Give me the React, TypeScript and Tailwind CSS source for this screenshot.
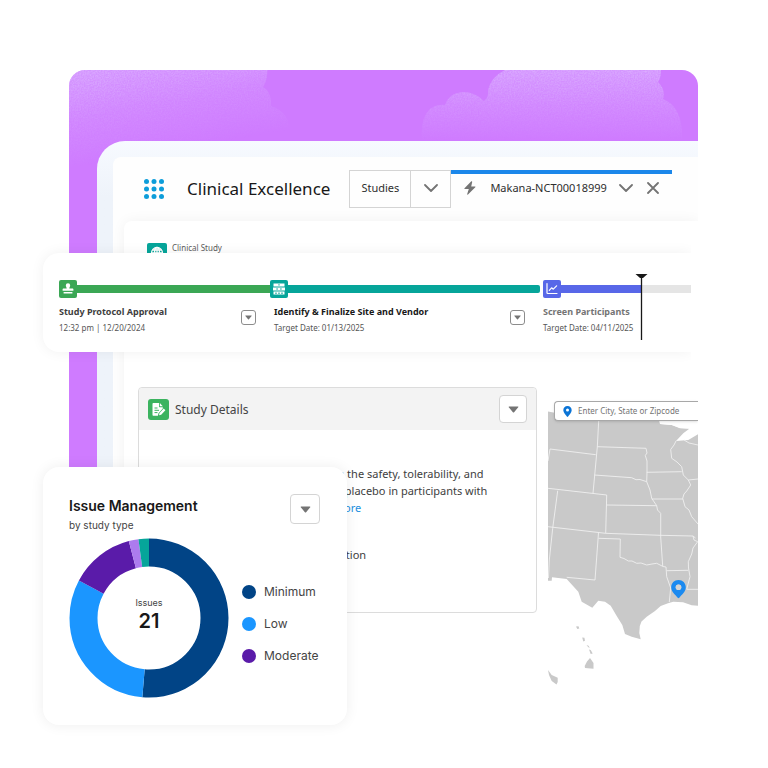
import type { ReactNode } from "react";

const SANS = "font-['Noto_Sans','Open_Sans',sans-serif]";

function Caret({ className }: { className: string }) {
  return (
    <svg viewBox="0 0 12 8" className={className} aria-hidden="true">
      <path d="M1 0.5h10c.5 0 .8.5.4.9L6.7 7.2c-.4.4-1 .4-1.4 0L.6 1.4C.2 1 .5.5 1 .5z" fill="#747474" />
    </svg>
  );
}

function Chevron() {
  return (
    <svg viewBox="0 0 14 8" className="h-2 w-3.5" fill="none" stroke="#747474" strokeWidth="1.8" strokeLinecap="round" strokeLinejoin="round" aria-hidden="true">
      <path d="M1 1l6 6 6-6" />
    </svg>
  );
}

const CLOUD_LEFT = "M69 70H267.5Q267 82 263 87Q272 92 271 106Q290 112 291 135V180H69z";
const CLOUD_RIGHT =
  "M422 141Q420 118 430 109Q437 104 445 105Q449 93 463 92Q475 92 484 101Q489 97 488 90Q491 77 505 70H661Q661 78 658 82Q666 90 663 99Q680 106 682 130V141z";

function Clouds() {
  return (
    <>
      <svg viewBox="69 70 230 110" className="absolute top-0 left-0 h-[110px] w-[230px]" aria-hidden="true">
        <defs>
          <linearGradient id="fadeL" x1="0" y1="0" x2="0.35" y2="1">
            <stop offset="0" stopColor="#dcbcff" stopOpacity="0.42" />
            <stop offset="0.4" stopColor="#dcbcff" stopOpacity="0.15" />
            <stop offset="0.8" stopColor="#dcbcff" stopOpacity="0" />
          </linearGradient>
          <filter id="grain" x="0" y="0" width="1" height="1" colorInterpolationFilters="sRGB">
            <feTurbulence type="fractalNoise" baseFrequency="0.7" numOctaves="2" seed="4" />
            <feColorMatrix values="0 0 0 0 0.9  0 0 0 0 0.82  0 0 0 0 1  1.8 0 0 0 -0.5" result="n" />
            <feComposite in="n" in2="SourceGraphic" operator="in" />
          </filter>
        </defs>
        <path d={CLOUD_LEFT} fill="url(#fadeL)" />
        <path d={CLOUD_LEFT} fill="url(#fadeL)" filter="url(#grain)" />
      </svg>
      <svg viewBox="418 70 280 72" className="absolute top-0 right-0 h-[72px] w-[280px]" aria-hidden="true">
        <defs>
          <linearGradient id="fadeR" x1="0" y1="0" x2="0" y2="1">
            <stop offset="0" stopColor="#dcbcff" stopOpacity="0.4" />
            <stop offset="0.5" stopColor="#dcbcff" stopOpacity="0.17" />
            <stop offset="1" stopColor="#dcbcff" stopOpacity="0" />
          </linearGradient>
        </defs>
        <path d={CLOUD_RIGHT} fill="url(#fadeR)" />
        <path d={CLOUD_RIGHT} fill="url(#fadeR)" filter="url(#grain)" />
      </svg>
    </>
  );
}

function AppHeader() {
  return (
    <header className="flex h-16 items-center pl-[31px]">
      <button type="button" aria-label="App launcher" className="shrink-0">
        <svg viewBox="0 0 20 20" className="size-5" fill="#0d9dda" aria-hidden="true">
          {[2.5, 10, 17.5].map((y) => [2.5, 10, 17.5].map((x) => <circle key={`${x}-${y}`} cx={x} cy={y} r="2.500" />))}
        </svg>
      </button>
      <h1 className="ml-[23px] shrink-0 text-[17px] leading-6 whitespace-nowrap text-[#181818]">Clinical Excellence</h1>
      <nav className="ml-[19px] flex h-[38px] shrink-0 text-[11px] text-[#2e2e2e]">
        <button type="button" className="w-[62px] border border-[#d4d4d4] pb-0.5">Studies</button>
        <button type="button" aria-label="Studies menu" className="-ml-px flex w-[41px] items-center justify-center border border-[#d4d4d4] pb-0.5">
          <Chevron />
        </button>
        <div className="flex w-[221px] items-center border-t-4 border-[#1b87ea] pb-1.5 pl-[13px]">
          <svg viewBox="0 0 12 14" className="h-3.5 w-3 shrink-0" fill="#747474" aria-hidden="true">
            <path d="M7.300 0.300L0.500 7.200c-.3.4-.1.800.3.800H4.800L3.200 13c-.2.600.4.900.8.500L11.300 6.200c.3-.3.100-.8-.3-.8H7.200L8.200 1C8.300.3 7.700 0 7.300.3z" />
          </svg>
          <a href="#study" className="ml-3.5 whitespace-nowrap">Makana-NCT00018999</a>
          <span className="ml-auto flex items-center gap-3.5 pr-[13px]">
            <button type="button" aria-label="Tab menu"><Chevron /></button>
            <button type="button" aria-label="Close tab">
              <svg viewBox="0 0 12 12" className="size-3" stroke="#747474" strokeWidth="1.800" strokeLinecap="round" aria-hidden="true">
                <path d="M1 1l10 10M11 1L1 11" />
              </svg>
            </button>
          </span>
        </div>
      </nav>
    </header>
  );
}

function StudyDetails() {
  return (
    <section className="min-h-[226px] min-w-0 flex-1 rounded border border-[#dcdcdc] bg-white">
      <div className="flex h-[42px] items-center rounded-t bg-[#f3f3f3] pr-[9px] pl-[9px]">
        <svg viewBox="0 0 21 21" className="size-[21px]" aria-hidden="true">
          <rect width="21" height="21" rx="3" fill="#3bb35f" />
          <path d="M5.500 4h5.500v3.200c0 .6.4 1 1 1h2.800v1.300l-4.300 4.700-.6 2.600H5.500c-.6 0-1-.4-1-1V5c0-.6.4-1 1-1z" fill="#fff" />
          <path d="M11.800 4l3 3.300h-3z" fill="#fff" />
          <path d="M6.500 9h3M6.500 11.300h4.500M6.500 13.600h3" stroke="#3bb35f" strokeWidth="1" />
          <path d="M15.700 9.600l1.700 1.700-4.200 4.400-2.200.6.500-2.300z" fill="#fff" />
        </svg>
        <h2 className="ml-1.5 pt-0.5 text-xs leading-5 text-[#444]">Study Details</h2>
        <button type="button" aria-label="Study details menu" className="ml-auto flex size-7 items-center justify-center rounded border border-[#d4d4d4] bg-white">
          <Caret className="h-[7px] w-[11px]" />
        </button>
      </div>
      <div className="pt-[35px] pl-[183px] text-[11px] leading-[17px] whitespace-nowrap text-[#3e3e3e]">
        <p>
          with the safety, tolerability, and
          <br />
          oral placebo in participants with
          <br />
          <a href="#more" className="text-[#1b8fe0]">... more</a>
        </p>
        <p className="mt-[30px]">Location</p>
      </div>
    </section>
  );
}

const STATE_LINES = [
  "M598.700 421L597.300 447L593 493.300",
  "M548 461L550 449L595.700 454.700",
  "M597.300 446.700L646 448.300L647 453L645.300 455.500L647 461V472L646.700 481.700",
  "M594.300 475L631.700 477.700L636 479.700L640 479.500L646.700 481.700L650 490L651.700 498.300L656.700 505.700L657.500 510L660.700 513.300V537",
  "M646.700 472.300L681.700 471.700",
  "M676 441L674 445L670.700 449.500L671.700 458.300L677 462L681.700 466.700L683.300 475L688.300 480L690.700 485L686.700 491L684 494L682.700 498.300L685 506.700L689 510L691.700 516.700L698 524",
  "M688.300 480L698 479",
  "M684 440L689 443L698 445",
  "M651.700 499H683",
  "M548 488.300L606.700 495L605.700 533.300",
  "M606.700 505L656.700 505.700",
  "M557.700 490.700L552.700 528.300L549.300 560L548.500 578",
  "M548 526.700L605.700 533.300L660 535.300L693 536L695.500 538",
  "M598.500 532.700L595 580L566.700 577.300",
  "M598.500 538.300L620.300 539L620 557.300L624 558.500L628.300 561L632 561L636.700 563.300L641 563L646.700 565L652 564L656.700 563.300L663 566.500L666 567L666.700 576.700L670.700 588L669.300 602",
  "M660.700 537L662.700 566",
  "M693 536L694 540L697.700 541.700L693 548L691.700 554L688.300 561.700L688.500 568L690 576.700L686.700 589.300H698",
  "M666.700 570.700L688.300 570.300",
];

function SiteMap() {
  return (
    <section className="w-[150px] shrink-0 pt-3.5">
      <div className="relative z-10 -mb-2.5 ml-1.5 flex h-5 items-center rounded-l-sm border border-r-0 border-[#a8a8a8] bg-white pl-2 shadow-sm">
        <svg viewBox="0 0 9 11" className="h-[11px] w-[9px] shrink-0" aria-hidden="true">
          <path fillRule="evenodd" d="M4.500 0C2 0 .300 1.900.300 4.200c0 2.600 2.600 4.500 3.600 6.300.3.500.9.500 1.200 0 1-1.800 3.600-3.700 3.600-6.300C8.700 1.900 7 0 4.500 0zm0 2.600a1.500 1.500 0 110 3 1.500 1.500 0 010-3z" fill="#0b74d6" />
        </svg>
        <input type="text" aria-label="Enter City, State or Zipcode" placeholder="Enter City, State or Zipcode" className="ml-1.5 w-full min-w-0 text-[8px] leading-3 outline-none placeholder:text-[#747474]" />
      </div>
      <svg viewBox="548 411 150 275" className="h-[275px] w-[150px]" role="img" aria-label="Map of study sites">
        <path
          fill="#c9c9c9"
          d="M548 411.500L556 413H658L660 424L671.700 425L680 428.300L689.300 428.700L683.300 433.300L676 441L682 440.500L688.300 440L698 434.300V605.700L691.700 605.300L683 602.300L673.300 601.700L668 603.300L660.700 606L655 611L646.700 616.700L641.500 621.500L639.800 626L639.300 633L640.700 639.200L631.700 636.700L625 634L622.300 625L616.700 616L610.700 605.700L605 601.700L598.300 600.700L592.300 607.700L581.700 601.700L578.300 591.700L566.700 579L552 577.300L551.700 580.700H548z"
        />
        <path fill="#fff" d="M658 411h40v17l-9 .5-9-.5-8-3-12-1z" />
        <g fill="none" stroke="#efefef" strokeWidth="0.900" strokeLinejoin="round">
          {STATE_LINES.map((d) => <path key={d} d={d} />)}
        </g>
        <g fill="#c9c9c9">
          <path d="M576 626.500l2.500-.3.800 2.300-2 .6zM582.200 637.500l2.200.3.600 3-1.700.8zM586.500 645l2 .8 1.300 2-1.500-.6zM589 649.500l1.700.5 2 3.500-2 .5z" />
          <path d="M590 658L593.500 663V668.700L585 668L584.700 666L587 661.500zM548 670L551.700 675L557.700 677.700V682L556.500 684.500L551.700 681L549 675z" />
        </g>
        <path
          fillRule="evenodd"
          fill="#1b8af0"
          d="M678.500 580c-4.200 0-7.300 3.200-7.300 7.200 0 4.700 4.500 7.600 6.500 10.600.4.600 1.200.6 1.600 0 2-3 6.500-5.900 6.500-10.600 0-4-3.100-7.200-7.300-7.200zm0 4.500a2.800 2.800 0 110 5.600 2.800 2.800 0 010-5.600z"
        />
        <circle cx="678.500" cy="587.300" r="2.800" fill="#d4d4d4" />
      </svg>
    </section>
  );
}

function StageIcon({ className, children }: { className: string; children: ReactNode }) {
  return (
    <span className={`size-[18px] shrink-0 rounded-xs ${className}`}>
      <svg viewBox="0 0 18 18" className="size-[18px]" aria-hidden="true">{children}</svg>
    </span>
  );
}

function StageText({ title, date, className, menu }: { title: string; date: string; className: string; menu?: boolean }) {
  return (
    <div className={`mt-1.5 flex items-start whitespace-nowrap ${className}`}>
      <div>
        <h3 className="text-[9px] leading-4 font-bold">{title}</h3>
        <p className="text-[8px] leading-4 text-[#555]">{date}</p>
      </div>
      {menu && (
        <button type="button" aria-label={`${title} menu`} className="mt-1.5 ml-auto flex size-[15px] items-center justify-center rounded-[3px] border border-[#8c8c8c]">
          <Caret className="h-[5px] w-[7px]" />
        </button>
      )}
    </div>
  );
}

function Timeline() {
  return (
    <section className="absolute top-[253px] right-[77px] left-[43px] grid grid-cols-[211fr_273fr_148fr] rounded-l-2xl bg-white pt-[27px] pb-4 pl-4 shadow-[0_0_14px_rgba(0,0,0,0.06)] [clip-path:inset(-20px_0_-20px_-20px)]">
      <div className="min-w-0">
        <div className="flex items-center">
          <StageIcon className="bg-[#3ba755]">
            <path d="M9 3.200a2.200 2.200 0 012.200 2.200c0 1.300-.9 1.700-.9 3.200h3.100c.6 0 1 .4 1 1v1.100H3.600V9.600c0-.6.400-1 1-1h3.100c0-1.500-.9-1.900-.9-3.200A2.200 2.200 0 019 3.200zM4.600 12h8.800v1.600H4.600z" fill="#fff" />
          </StageIcon>
          <div className="h-2 flex-1 bg-[#3ba755]" />
        </div>
        <StageText title="Study Protocol Approval" date="12:32 pm | 12/20/2024" className="pr-3.5 text-[#3e3e3e]" menu />
      </div>
      <div className="min-w-0">
        <div className="flex items-center pr-[3px]">
          <StageIcon className="bg-[#06a59a]">
            <path d="M3.500 3.500h11v3h-11zM3 7.500h12v3H3zM3.500 11.500h11v3h-11z" fill="#fff" />
            <path d="M9 4.200v1.400M6.300 9h1.600M10.100 9h1.600M6 12.500V14M9 12.500V14M12 12.500V14" stroke="#06a59a" strokeWidth="1.200" />
          </StageIcon>
          <div className="h-2 flex-1 rounded-r-xs bg-[#06a59a]" />
        </div>
        <StageText title="Identify & Finalize Site and Vendor" date="Target Date: 01/13/2025" className="pr-[18px] pl-1 text-[#181818]" menu />
      </div>
      <div className="relative min-w-0">
        <div className="flex items-center">
          <StageIcon className="bg-[#5867e8]">
            <path d="M4 3.500v9.300c0 .4.300.700.700.700H14" fill="none" stroke="#fff" strokeWidth="1.200" strokeLinecap="round" />
            <path d="M6.300 10.300L8.600 7.800l1.700 1.400 3.300-3.400" fill="none" stroke="#fff" strokeWidth="1.200" strokeLinecap="round" strokeLinejoin="round" />
          </StageIcon>
          <div className="h-2 w-20 bg-[#5867e8]" />
          <div className="h-2 flex-1 bg-[#e5e5e5]" />
        </div>
        <StageText title="Screen Participants" date="Target Date: 04/11/2025" className="text-[#747474]" />
        <svg viewBox="0 0 13 67" className="absolute -top-[7px] left-[92px] h-[67px] w-[13px]" aria-hidden="true">
          <path d="M0.500 1h12L8 5H5z" fill="#181818" />
          <path d="M6.500 2v65" stroke="#181818" strokeWidth="1.300" />
        </svg>
      </div>
    </section>
  );
}

const SLICES = [
  { color: "#014486", from: 0, to: 184.9 },
  { color: "#1b96ff", from: 184.9, to: 298.2 },
  { color: "#5a1ba9", from: 298.2, to: 345.2 },
  { color: "#ad7bee", from: 345.2, to: 352.3 },
  { color: "#06a59a", from: 352.3, to: 360 },
];

const LEGEND = [
  { label: "Minimum", dot: "bg-[#014486]" },
  { label: "Low", dot: "bg-[#1b96ff]" },
  { label: "Moderate", dot: "bg-[#5a1ba9]" },
];

function IssueCard() {
  return (
    <section className="absolute top-[467px] left-[43px] w-[304px] rounded-2xl bg-white pt-[27px] pr-[27px] pb-[27px] pl-[26px] font-[Inter,sans-serif] shadow-[0_0_14px_rgba(0,0,0,0.07)]">
      <div className="flex items-start justify-between">
        <div>
          <h2 className="text-sm leading-6 font-semibold text-[#181818]">Issue Management</h2>
          <p className="text-[10px] leading-3.5 text-[#444]">by study type</p>
        </div>
        <button type="button" aria-label="Issue menu" className="flex size-[30px] items-center justify-center rounded border border-[#d4d4d4]">
          <Caret className="h-[7px] w-[11px]" />
        </button>
      </div>
      <div className="mt-1.5 flex">
        <div className="grid size-40 shrink-0 place-items-center">
          <svg viewBox="0 0 160 160" className="col-start-1 row-start-1 size-40 -rotate-90" aria-hidden="true">
            {SLICES.map((s) => (
              <circle key={s.color} cx="80" cy="80" r="65.500" fill="none" stroke={s.color} strokeWidth="28" pathLength="360" strokeDasharray={`${s.to - s.from} 360`} strokeDashoffset={-s.from} />
            ))}
          </svg>
          <div className="col-start-1 row-start-1 pb-1.5 text-center">
            <p className="text-[9px] leading-3 text-[#444]">Issues</p>
            <p className="text-xl leading-6 font-semibold text-[#181818]">21</p>
          </div>
        </div>
        <ul className="flex flex-col gap-3 pt-11 pl-[13px]">
          {LEGEND.map((l) => (
            <li key={l.label} className="flex h-5 items-center gap-2 text-xs text-[#444]">
              <span className={`size-3.5 rounded-full ${l.dot}`} />
              {l.label}
            </li>
          ))}
        </ul>
      </div>
    </section>
  );
}

export default function App() {
  return (
    <main className={`relative min-h-screen bg-white pt-[70px] pr-[70px] pb-16 pl-[69px] ${SANS}`}>
      <div className="relative overflow-hidden rounded-t-2xl bg-[#cf7bff] pt-[71px] pl-7">
        <Clouds />
        <div className="relative rounded-tl-[28px] bg-linear-to-b from-[#f7faff] to-[#eef3fa] to-10% pt-4 pl-4">
          <div className="rounded-tl-lg bg-[#fefefe]">
            <AppHeader />
            <div className="pl-[11px]">
              <div className="rounded-tl-lg bg-white pt-[22px] pb-3.5 pl-3.5 shadow-[0_0_14px_rgba(0,0,0,0.05)]">
                <div className="flex h-5 items-start gap-[5px] pl-[9px]">
                  <svg viewBox="0 0 20 20" className="size-5" aria-hidden="true">
                    <rect width="20" height="20" rx="2" fill="#06a59a" />
                    <g fill="none" stroke="#fff" strokeWidth="1.300">
                      <circle cx="10" cy="10" r="5.500" />
                      <ellipse cx="10" cy="10" rx="2.500" ry="5.500" />
                      <path d="M4.500 10h11M5.500 7h9M10 4.500v11" />
                    </g>
                  </svg>
                  <span className="text-[8px] leading-[10px] text-[#5c5c5c]">Clinical Study</span>
                </div>
                <div className="mt-[124px] flex items-start gap-[11px]">
                  <StudyDetails />
                  <SiteMap />
                </div>
              </div>
            </div>
          </div>
        </div>
      </div>
      <Timeline />
      <IssueCard />
    </main>
  );
}
